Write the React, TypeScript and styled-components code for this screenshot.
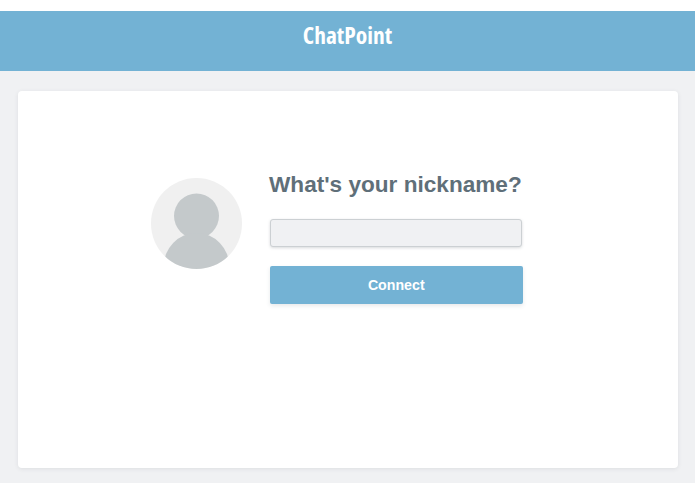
import React from "react"
import styled, { createGlobalStyle } from "styled-components"

const GlobalStyle = createGlobalStyle`
    html, body {
        margin: 0;
        padding: 0;
        background: #fff;
    }
`

const Page = styled.div`
    width: 695px;
    height: 494px;
    padding: 11px 0;
    box-sizing: border-box;
    display: flex;
    flex-direction: column;
    font-family: "Liberation Sans", Arial, sans-serif;
`

const Header = styled.header`
    height: 60px;
    flex: none;
    background: #73b2d4;
    display: flex;
    justify-content: center;
    padding-top: 9px;
    box-sizing: border-box;
`

const Title = styled.h1`
    margin: 0;
    color: #fff;
    font-family: "Open Sans", sans-serif;
    font-stretch: 75%;
    font-weight: 700;
    font-size: 23.5px;
    line-height: 30px;
`

const Main = styled.main`
    flex: 1;
    background: #f0f1f3;
    padding: 20px 17px 15px 18px;
    display: flex;
`

const Card = styled.section`
    flex: 1;
    background: #fff;
    border-radius: 4px;
    box-shadow: 0 1px 4px rgba(60, 70, 80, 0.1);
    display: flex;
    justify-content: center;
    align-items: flex-start;
    padding: 87px 23px 0 0;
    gap: 27px;
`

const Avatar = styled.svg`
    width: 91px;
    height: 91px;
    flex: none;
    display: block;
`

const Form = styled.form`
    width: 253px;
    display: flex;
    flex-direction: column;
`

const Question = styled.h2`
    margin: 0 0 27px;
    color: #5f6f79;
    font-size: 22.6px;
    font-weight: 700;
    line-height: 14px;
    white-space: nowrap;
`

const NicknameInput = styled.input`
    height: 28px;
    width: 252px;
    margin-left: 1px;
    box-sizing: border-box;
    background: #f0f1f3;
    border: 1px solid #ccd0d3;
    border-radius: 3px;
    box-shadow: 0 1px 3px rgba(60, 70, 80, 0.2);
    padding: 0 8px;
    outline: none;
`

const ConnectButton = styled.button`
    height: 38px;
    width: 252.5px;
    margin: 19px 0 0 1px;
    border: none;
    border-radius: 2px;
    background: #73b2d4;
    color: #fff;
    font-family: "Liberation Sans", Arial, sans-serif;
    font-size: 14.2px;
    font-weight: 700;
    box-shadow: 0 2px 4px rgba(60, 70, 80, 0.12);
`

export default function App() {
    return (
        <Page>
            <GlobalStyle />
            <Header>
                <Title>ChatPoint</Title>
            </Header>
            <Main>
                <Card>
                    <Avatar viewBox="0 0 91 91">
                        <defs>
                            <clipPath id="avatar-clip">
                                <circle cx="45.5" cy="45.5" r="45.5" />
                            </clipPath>
                        </defs>
                        <circle cx="45.5" cy="45.5" r="45.5" fill="#f0f0f0" />
                        <g clipPath="url(#avatar-clip)" fill="#c4c9cb">
                            <circle cx="45.5" cy="38" r="22.5" />
                            <ellipse cx="45.5" cy="89" rx="33" ry="34" />
                        </g>
                    </Avatar>
                    <Form>
                        <Question>What's your nickname?</Question>
                        <NicknameInput type="text" />
                        <ConnectButton type="button">Connect</ConnectButton>
                    </Form>
                </Card>
            </Main>
        </Page>
    )
}
